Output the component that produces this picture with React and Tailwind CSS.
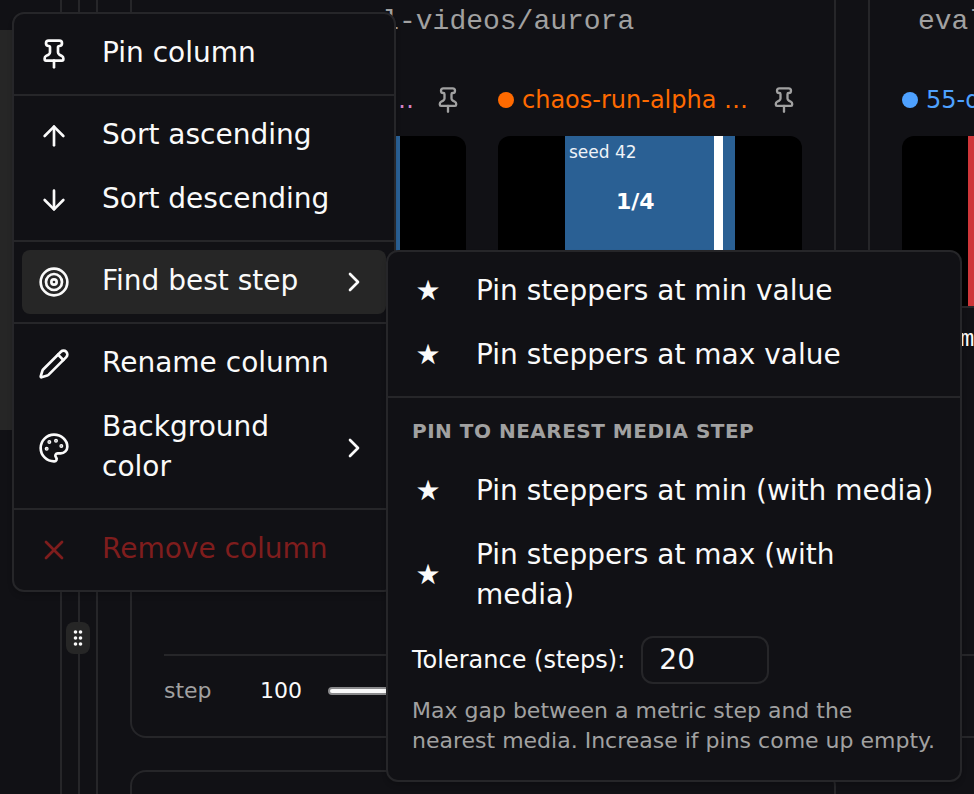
import { ArrowDown, ArrowUp, ChevronRight, Palette, Pencil, Pin, Target, X } from 'lucide-react';

const sections = [
  [{ icon: Pin, label: 'Pin column' }],
  [
    { icon: ArrowUp, label: 'Sort ascending' },
    { icon: ArrowDown, label: 'Sort descending' },
  ],
  [{ icon: Target, label: 'Find best step', submenu: true, active: true }],
  [
    { icon: Pencil, label: 'Rename column' },
    { icon: Palette, label: 'Background color', submenu: true },
  ],
  [{ icon: X, label: 'Remove column', danger: true }],
];

function Separator() {
  return <div role="separator" className="-mx-2 my-2 h-0.5 bg-[#262629]" />;
}

function MenuItem({ icon: Icon, label, submenu, active, danger }) {
  return (
    <button
      type="button"
      role="menuitem"
      aria-haspopup={submenu ? 'menu' : undefined}
      className={`flex w-full items-center rounded-lg px-4 py-[11px] text-left text-[28px] leading-10 ${
        active ? 'bg-[#262626]' : ''
      } ${danger ? 'text-[#7f1d1d]' : 'text-[#fafafa]'}`}
    >
      <Icon className="mr-8 size-8 shrink-0" />
      <span className="flex-1 pb-0.5">{label}</span>
      {submenu && <ChevronRight className="size-8 shrink-0" />}
    </button>
  );
}

function StarItem({ label }) {
  return (
    <button
      type="button"
      role="menuitem"
      className="flex w-full items-center gap-8 rounded-lg px-4 pt-[11px] pb-[13px] text-left text-[28px] leading-10"
    >
      <span aria-hidden="true" className="w-8 shrink-0 text-center">★</span>
      <span>{label}</span>
    </button>
  );
}

function ColumnMenu() {
  return (
    <div role="menu" className="absolute top-3 left-3 w-96 rounded-xl border-2 border-[#262629] bg-[#111115] p-2 shadow-md">
      {sections.map((items, i) => (
        <div key={items[0].label}>
          {i > 0 && <Separator />}
          {items.map((item) => (
            <MenuItem key={item.label} {...item} />
          ))}
        </div>
      ))}
    </div>
  );
}

function BestStepMenu() {
  return (
    <div role="menu" className="absolute top-[250px] left-[386px] w-[576px] rounded-xl border-2 border-[#262629] bg-[#111115] p-2 text-[#fafafa] shadow-md">
      <StarItem label="Pin steppers at min value" />
      <StarItem label="Pin steppers at max value" />
      <Separator />
      <div className="px-4 pt-2.5 pb-3.5 text-[20px] leading-[30px] font-bold tracking-wide text-[#a1a1a1] uppercase">
        Pin to nearest media step
      </div>
      <StarItem label="Pin steppers at min (with media)" />
      <StarItem label="Pin steppers at max (with media)" />
      <div className="px-4 pt-2 pb-4">
        <div className="flex items-center gap-4">
          <label htmlFor="tolerance" className="text-[24px] leading-8">Tolerance (steps):</label>
          <input
            id="tolerance"
            type="text"
            inputMode="numeric"
            defaultValue="20"
            className="h-12 w-32 rounded-xl border-2 border-[#262629] bg-transparent px-4 pb-0.5 text-[28px] leading-10"
          />
        </div>
        <p className="mt-3 text-[22px] leading-[30px] text-[#a1a1a1]">
          Max gap between a metric step and the nearest media. Increase if pins come up empty.
        </p>
      </div>
    </div>
  );
}

function Run({ name, dot, text, frame, seed, count }) {
  return (
    <div className="min-w-0">
      <div className="flex h-9 items-center">
        <span className={`mr-2 size-4 shrink-0 rounded-full ${dot}`} />
        <span className={`min-w-0 flex-1 truncate text-[24px] leading-8 ${text}`}>{name}</span>
        <button type="button" aria-label="Pin run" className="ml-3 flex size-9 shrink-0 items-center justify-center text-[#a1a1a1]">
          <Pin className="size-7" />
        </button>
      </div>
      <div className="mt-[18px] flex justify-center overflow-hidden rounded-t-xl bg-black">
        <div className={`relative h-[170px] w-[170px] ${frame}`}>
          {seed && (
            <>
              <span className="absolute top-1 left-1 text-[17px] leading-6 text-[#eef3f8]">{seed}</span>
              <span className="absolute inset-y-0 right-3 w-[9px] bg-white" />
              <span className="absolute top-[51px] left-[51px] text-[22px] leading-[30px] font-bold text-white">{count}</span>
            </>
          )}
        </div>
      </div>
    </div>
  );
}

function Stepper({ id }) {
  return (
    <div className="mt-auto flex items-center border-t-2 border-[#262629] pt-[19px] text-[22px] leading-8">
      <label htmlFor={id} className="w-24 text-[#a1a1a1]">step</label>
      <span className="w-[68px] text-[#fafafa]">100</span>
      <input
        id={id}
        type="range"
        min="0"
        max="100"
        defaultValue="100"
        className="h-2 flex-1 appearance-none rounded-sm border-2 border-[#8a8a8c] bg-[#fafafa]"
      />
    </div>
  );
}

function App() {
  return (
    <div className="relative flex h-screen overflow-hidden bg-[#111115] font-['DejaVu_Sans',sans-serif] text-[#fafafa]">
      <aside className="w-[62px] shrink-0 border-r-2 border-[#262629] pt-[30px]">
        <div className="h-[400px] bg-[#262626]" />
      </aside>

      <div className="relative flex w-9 shrink-0 justify-center border-r-2 border-[#262629]">
        <div className="w-0.5 bg-[#262629]" />
        <button
          type="button"
          aria-label="Resize sidebar"
          className="absolute top-[622px] left-1 grid h-8 w-6 place-items-center rounded-lg bg-[#262626]"
        >
          <svg className="h-4 w-2.5" viewBox="0 0 10 16" fill="#fafafa">
            <circle cx="2.5" cy="2" r="1.8" />
            <circle cx="7.5" cy="2" r="1.8" />
            <circle cx="2.5" cy="8" r="1.8" />
            <circle cx="7.5" cy="8" r="1.8" />
            <circle cx="2.5" cy="14" r="1.8" />
            <circle cx="7.5" cy="14" r="1.8" />
          </svg>
        </button>
      </div>

      <main className="flex min-w-0 flex-1 flex-col gap-8 overflow-hidden pl-8">
        <div className="flex h-[738px] shrink-0 gap-8">
          <section className="flex w-[706px] shrink-0 flex-col rounded-b-2xl border-2 border-t-0 border-[#262629] px-8 pb-[29px]">
            <h2 className="pt-0.5 text-center font-['Liberation_Mono',monospace] text-[28px] leading-10 text-[#a1a1a1]">
              eval-videos/aurora
            </h2>
            <div className="mt-10 grid grid-cols-[302px_1fr] gap-8">
              <Run name="chaos-run-alpha seed 41" dot="bg-[#d583c4]" text="text-[#d583c4]" frame="bg-[#2a6094]" />
              <Run
                name="chaos-run-alpha seed 42"
                dot="bg-[#ff6a00]"
                text="text-[#ff6a00]"
                frame="bg-[#2a6094]"
                seed="seed 42"
                count="1/4"
              />
            </div>
            <Stepper id="step-aurora" />
          </section>

          <section className="flex w-[706px] shrink-0 flex-col rounded-b-2xl border-2 border-t-0 border-[#262629] px-8 pb-[29px]">
            <h2 className="pt-0.5 pl-4 font-['Liberation_Mono',monospace] text-[28px] leading-10 text-[#a1a1a1]">
              eval-videos
            </h2>
            <div className="mt-10 grid grid-cols-[302px_1fr] gap-8">
              <div>
                <Run name="55-delta-run" dot="bg-[#4ea1ff]" text="text-[#4ea1ff]" frame="bg-[#cf3639]" />
                <div className="border-t-2 border-[#262629] pt-4 pl-[58px] font-['Liberation_Mono',monospace] text-[24px] leading-8">
                  media
                </div>
              </div>
            </div>
            <Stepper id="step-delta" />
          </section>
        </div>

        <section className="h-80 w-[706px] shrink-0 rounded-2xl border-2 border-[#262629]" />
      </main>

      <ColumnMenu />
      <BestStepMenu />
    </div>
  );
}

export default App
